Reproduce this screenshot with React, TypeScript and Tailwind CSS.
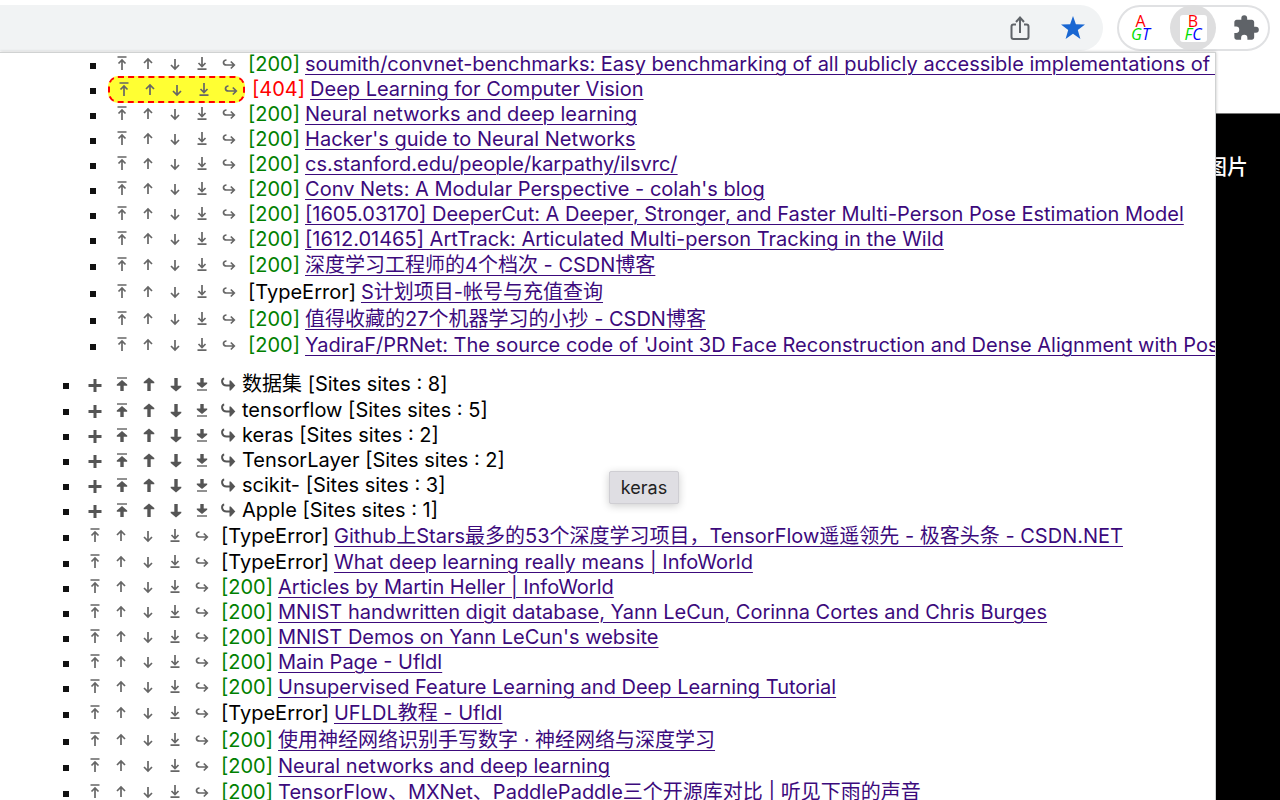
import type { ReactNode } from "react";
import { clsx } from "clsx";

interface Site {
  status: string;
  title: string;
  tall?: boolean;
  active?: boolean;
}

interface Folder {
  name: string;
  count: number;
  tall?: boolean;
}

const nestedSites: Site[] = [
  {
    status: "200",
    title: "soumith/convnet-benchmarks: Easy benchmarking of all publicly accessible implementations of convnets",
  },
  { status: "404", title: "Deep Learning for Computer Vision", active: true },
  { status: "200", title: "Neural networks and deep learning" },
  { status: "200", title: "Hacker's guide to Neural Networks" },
  { status: "200", title: "cs.stanford.edu/people/karpathy/ilsvrc/" },
  { status: "200", title: "Conv Nets: A Modular Perspective - colah's blog" },
  {
    status: "200",
    title: "[1605.03170] DeeperCut: A Deeper, Stronger, and Faster Multi-Person Pose Estimation Model",
  },
  { status: "200", title: "[1612.01465] ArtTrack: Articulated Multi-person Tracking in the Wild" },
  { status: "200", title: "深度学习工程师的4个档次 - CSDN博客", tall: true },
  { status: "TypeError", title: "S计划项目-帐号与充值查询", tall: true },
  { status: "200", title: "值得收藏的27个机器学习的小抄 - CSDN博客", tall: true },
  {
    status: "200",
    title: "YadiraF/PRNet: The source code of 'Joint 3D Face Reconstruction and Dense Alignment with Position Map'",
  },
];

const folders: Folder[] = [
  { name: "数据集", count: 8, tall: true },
  { name: "tensorflow", count: 5 },
  { name: "keras", count: 2 },
  { name: "TensorLayer", count: 2 },
  { name: "scikit-", count: 3 },
  { name: "Apple", count: 1 },
];

const sites: Site[] = [
  {
    status: "TypeError",
    title: "Github上Stars最多的53个深度学习项目，TensorFlow遥遥领先 - 极客头条 - CSDN.NET",
    tall: true,
  },
  { status: "TypeError", title: "What deep learning really means | InfoWorld" },
  { status: "200", title: "Articles by Martin Heller | InfoWorld" },
  { status: "200", title: "MNIST handwritten digit database, Yann LeCun, Corinna Cortes and Chris Burges" },
  { status: "200", title: "MNIST Demos on Yann LeCun's website" },
  { status: "200", title: "Main Page - Ufldl" },
  { status: "200", title: "Unsupervised Feature Learning and Deep Learning Tutorial" },
  { status: "TypeError", title: "UFLDL教程 - Ufldl", tall: true },
  { status: "200", title: "使用神经网络识别手写数字 · 神经网络与深度学习", tall: true },
  { status: "200", title: "Neural networks and deep learning" },
  { status: "200", title: "TensorFlow、MXNet、PaddlePaddle三个开源库对比 | 听见下雨的声音", tall: true },
];

const thinIcons: [string, string][] = [
  ["Move to top", "M3.500 1h9M8 14V4M4.500 7.500 8 4 11.500 7.500"],
  ["Move up", "M8 13V3M4 7l4-4 4 4"],
  ["Move down", "M8 3v10M4 9l4 4 4-4"],
  ["Move to bottom", "M8 1v9M4.500 7 8 10.500 11.500 7M3.500 13.200h9"],
  ["Move to folder", "M5.500 4C1.500 4 1.500 9 5.500 9H13M9.800 5.500 13.300 9l-3.500 3.500"],
];

function IconButton({ label, children }: { label: string; children: ReactNode }) {
  return (
    <button type="button" aria-label={label} className="flex justify-center">
      <svg viewBox="0 0 16 16" className="h-4 w-4" fill="none" stroke="currentColor">
        {children}
      </svg>
    </button>
  );
}

function SiteControls({ active }: { active?: boolean }) {
  return (
    <span
      className={clsx(
        "grid shrink-0 grid-cols-[27px_26px_27px_28px_25px] items-center text-[#666]",
        active ? "h-[27px] rounded-[10px] border-2 border-dashed border-[#f00] bg-[#ff3]" : "pb-px"
      )}
    >
      {thinIcons.map(([label, d]) => (
        <IconButton key={label} label={label}>
          <path d={d} strokeWidth="1.700" />
        </IconButton>
      ))}
    </span>
  );
}

function FolderControls() {
  return (
    <span className="grid shrink-0 grid-cols-[27px_27px_27px_27px_26px_26px] items-center text-[#555]">
      <IconButton label="Expand">
        <path d="M8 2v13M1.500 8.500h13" strokeWidth="3" />
      </IconButton>
      <IconButton label="Move to top">
        <path d="M3 1h10" strokeWidth="1.300" />
        <path d="M8 14V6" strokeWidth="3.400" />
        <path d="M8 3 13.200 7.500v1.200H2.800V7.500z" fill="currentColor" stroke="none" />
      </IconButton>
      <IconButton label="Move up">
        <path d="M8 14V4" strokeWidth="3.400" />
        <path d="M8 .5 13.300 5v1.300H2.700V5z" fill="currentColor" stroke="none" />
      </IconButton>
      <IconButton label="Move down">
        <path d="M8 1v10" strokeWidth="3.400" />
        <path d="M8 14.500 2.700 10V8.700h10.600V10z" fill="currentColor" stroke="none" />
      </IconButton>
      <IconButton label="Move to bottom">
        <path d="M8 1v6" strokeWidth="3.400" />
        <path d="M8 11 2.800 6.700V5.500h10.400v1.200z" fill="currentColor" stroke="none" />
        <path d="M3 13h10" strokeWidth="1.300" />
      </IconButton>
      <IconButton label="Move to folder">
        <path d="M4.200 1.500C.8 2 1.500 8.500 6.500 8.500H11" strokeWidth="2" />
        <path d="M9.500 3.500h1.200l4.600 5-4.600 5H9.500z" fill="currentColor" stroke="none" />
      </IconButton>
    </span>
  );
}

function Bullet() {
  return <span className="mt-0.5 mr-3 h-[6px] w-[6px] shrink-0 bg-[#111]" />;
}

function SiteRow({ site }: { site: Site }) {
  return (
    <li className={clsx("flex items-center whitespace-nowrap", site.tall ? "h-[27px]" : "h-[25px]")}>
      <Bullet />
      <SiteControls active={site.active} />
      <span
        className={clsx(
          "ml-[7px]",
          site.status === "200" && "text-[#008000]",
          site.status === "404" && "text-[#f00]"
        )}
      >
        [{site.status}]
      </span>
      <a
        href="#"
        className="ml-[5px] text-[#3c0a7c] underline decoration-[#3c0a7c] decoration-1 underline-offset-[3px]"
      >
        {site.title}
      </a>
    </li>
  );
}

function LetterLogo({ top, left, right }: { top: string; left: string; right: string }) {
  return (
    <span className="flex h-[27px] w-[27px] flex-col items-center justify-center rounded-[3px] bg-white font-['Open_Sans',sans-serif] text-[16px] leading-[13px]">
      <span className="text-[#f00]">{top}</span>
      <span className="flex italic">
        <span className="text-[#0d0]">{left}</span>
        <span className="text-[#00f]">{right}</span>
      </span>
    </span>
  );
}

function Toolbar() {
  return (
    <header className="flex h-[52px] shrink-0 items-center bg-white pt-[5px] pr-[10px] pb-px">
      <div className="flex h-[46px] flex-1 items-center justify-end gap-[27px] rounded-r-full bg-[#f1f3f4] pr-[17px]">
        <button type="button" aria-label="Share">
          <svg viewBox="0 0 26 26" className="h-[26px] w-[26px]" fill="none" stroke="#5f6368" strokeWidth="2">
            <path d="M9 9.500H6.500a2 2 0 0 0-2 2V22a2 2 0 0 0 2 2h13a2 2 0 0 0 2-2V11.500a2 2 0 0 0-2-2H17" />
            <path d="M13 18V3M9 7l4-4.500L17 7" />
          </svg>
        </button>
        <button type="button" aria-label="Bookmark">
          <svg viewBox="0 0 26 26" className="h-[26px] w-[26px]" fill="#1a67d2">
            <path d="M13 1l2.900 8.200 9.100.3-7.200 5.500 2.600 8.900L13 18.700l-7.400 5.200 2.600-8.900L1 9.500l9.100-.3z" />
          </svg>
        </button>
      </div>
      <div className="ml-[14px] flex h-[46px] w-[153px] items-center rounded-full border-2 border-[#e0e1e3]">
        <button
          type="button"
          aria-label="AGT extension"
          className="flex h-[42px] w-[51px] shrink-0 items-center justify-center pr-2"
        >
          <LetterLogo top="A" left="G" right="T" />
        </button>
        <button
          type="button"
          aria-label="BFC extension"
          className="flex h-[46px] w-[46px] shrink-0 items-center justify-center rounded-full bg-[#dededf]"
        >
          <LetterLogo top="B" left="F" right="C" />
        </button>
        <button type="button" aria-label="Extensions" className="flex flex-1 justify-center pl-2">
          <svg viewBox="0 0 24 24" className="h-7 w-7" fill="#5f6368">
            <path d="M20.500 11H19V7c0-1.100-.9-2-2-2h-4V3.500a2.500 2.500 0 0 0-5 0V5H4c-1.100 0-2 .9-2 2v3.800h1.500a2.700 2.700 0 0 1 0 5.400H2V20c0 1.100.9 2 2 2h3.800v-1.500a2.700 2.700 0 0 1 5.400 0V22H17c1.100 0 2-.9 2-2v-4h1.500a2.500 2.500 0 0 0 0-5z" />
          </svg>
        </button>
      </div>
    </header>
  );
}

export default function App() {
  return (
    <div className="relative flex h-screen flex-col overflow-hidden bg-white font-['Inter','Noto_Sans_CJK_SC',sans-serif]">
      <Toolbar />
      <div className="flex min-h-0 flex-1">
        <main className="relative z-10 min-w-0 flex-1 overflow-hidden border-t border-r border-[#d0d2d2] bg-white text-[20px] leading-[25px] text-black shadow-[0_0_3px_rgba(0,0,0,0.25)]">
          <ul className="-mt-px pl-[90px]">
            {nestedSites.map((site) => (
              <SiteRow key={site.title} site={site} />
            ))}
          </ul>
          <ul className="mt-[13px] pl-[63px]">
            {folders.map((folder) => (
              <li
                key={folder.name}
                className={clsx("flex items-center whitespace-nowrap", folder.tall ? "h-[27px]" : "h-[25px]")}
              >
                <Bullet />
                <FolderControls />
                <span className="ml-px">
                  {folder.name} [Sites sites : {folder.count}]
                </span>
              </li>
            ))}
            {sites.map((site) => (
              <SiteRow key={site.title} site={site} />
            ))}
          </ul>
        </main>
        <aside className="flex w-16 shrink-0 flex-col pt-[61px]">
          <div className="flex flex-1 justify-end border-t border-[#777] bg-black pt-[39px] pr-8 text-[21px] leading-7 font-medium whitespace-nowrap text-white">
            图片
          </div>
        </aside>
      </div>
      <div
        role="tooltip"
        className="absolute top-[471px] left-[609px] z-20 flex h-[33px] w-[70px] items-center justify-center rounded-[2px] border border-[#cfced3] bg-[#dfdee3] text-[18px] text-[#222] shadow-[0_2px_8px_rgba(0,0,0,0.2)]"
      >
        keras
      </div>
    </div>
  );
}
